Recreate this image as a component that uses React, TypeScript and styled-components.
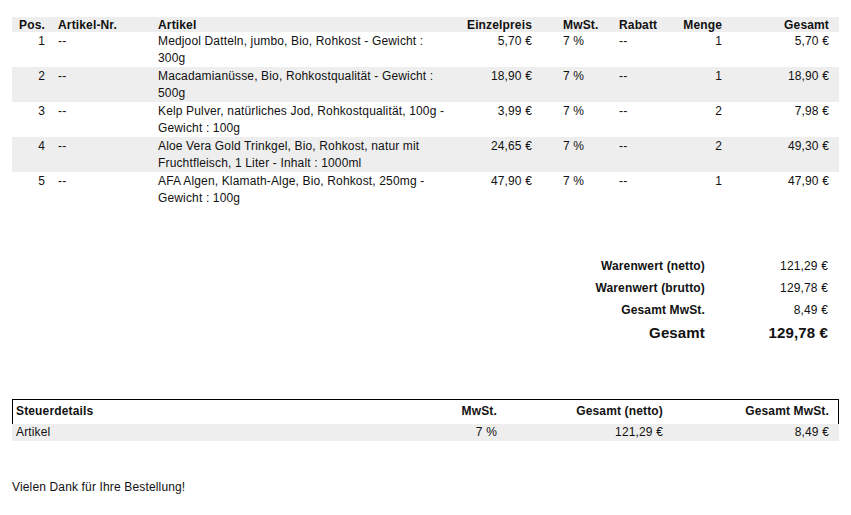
import styled, { createGlobalStyle } from 'styled-components';

const GlobalStyle = createGlobalStyle`
  html, body {
    margin: 0;
    padding: 0;
    background: #fff;
  }
  body {
    font-family: 'Liberation Sans', Arial, sans-serif;
    font-size: 12px;
    letter-spacing: 0.15px;
    color: #111;
  }
`;

const Page = styled.div`
  width: 851px;
  padding: 17px 12px 0;
  box-sizing: border-box;
`;

const ItemTable = styled.div`
  display: flex;
  flex-direction: column;
`;

const Row = styled.div<{ $head?: boolean; $shaded?: boolean }>`
  display: grid;
  grid-template-columns: 38px 103px 302px 82px 77px 46px 67px 112px;
  background: ${({ $shaded }) => ($shaded ? '#eeeeee' : 'transparent')};
  font-weight: ${({ $head }) => ($head ? 700 : 400)};
  line-height: ${({ $head }) => ($head ? '14px' : '17px')};
  padding-top: 1px;
  min-height: ${({ $head }) => ($head ? '15px' : '35px')};
  box-sizing: border-box;

  & > :nth-child(1) { text-align: right; padding-right: 5px; }
  & > :nth-child(2) { padding-left: 8px; }
  & > :nth-child(3) { padding-left: 5px; padding-right: 7px; }
  & > :nth-child(4) { text-align: right; padding-right: 5px; }
  & > :nth-child(5) { padding-left: 26px; }
  & > :nth-child(6) { padding-left: 5px; }
  & > :nth-child(7) { text-align: right; padding-right: 5px; }
  & > :nth-child(8) { text-align: right; padding-right: 10px; }
`;

const Cell = styled.div`
  white-space: normal;
`;

const Totals = styled.div`
  align-self: flex-end;
  display: grid;
  grid-template-columns: auto 123px;
  justify-content: end;
  margin: 48px 11px 0 0;
`;

const TotalLabel = styled.div<{ $big?: boolean }>`
  text-align: right;
  font-weight: 700;
  font-size: ${({ $big }) => ($big ? '15px' : '12px')};
  line-height: ${({ $big }) => ($big ? '23px' : '22px')};
`;

const TotalValue = styled(TotalLabel)`
  font-weight: ${({ $big }) => ($big ? 700 : 400)};
`;

const TaxBox = styled.div`
  margin-top: 55px;
  display: flex;
  flex-direction: column;
`;

const TaxRow = styled.div<{ $head?: boolean }>`
  display: grid;
  grid-template-columns: 1fr 100px 166px 165px;
  border-style: solid;
  border-color: ${({ $head }) => ($head ? '#000' : 'transparent')};
  border-width: ${({ $head }) => ($head ? '1px 1px 0 1px' : '0 1px')};
  background: ${({ $head }) => ($head ? '#fff' : '#eeeeee')};
  font-weight: ${({ $head }) => ($head ? 700 : 400)};
  line-height: ${({ $head }) => ($head ? '15px' : '17px')};
  padding: ${({ $head }) => ($head ? '4px 0 5px' : '0')};

  & > :nth-child(1) { padding-left: 3px; }
  & > :nth-child(n + 2) { text-align: right; padding-right: 10px; }
  & > :last-child { padding-right: 9px; }
`;

const Thanks = styled.p`
  margin: 38px 0 0;
  line-height: 17px;
`;

type Item = {
  pos: number;
  name: string;
  price: string;
  qty: number;
  total: string;
};

const items: Item[] = [
  { pos: 1, name: 'Medjool Datteln, jumbo, Bio, Rohkost - Gewicht : 300g', price: '5,70 €', qty: 1, total: '5,70 €' },
  { pos: 2, name: 'Macadamianüsse, Bio, Rohkostqualität - Gewicht : 500g', price: '18,90 €', qty: 1, total: '18,90 €' },
  { pos: 3, name: 'Kelp Pulver, natürliches Jod, Rohkostqualität, 100g - Gewicht : 100g', price: '3,99 €', qty: 2, total: '7,98 €' },
  { pos: 4, name: 'Aloe Vera Gold Trinkgel, Bio, Rohkost, natur mit Fruchtfleisch, 1 Liter - Inhalt : 1000ml', price: '24,65 €', qty: 2, total: '49,30 €' },
  { pos: 5, name: 'AFA Algen, Klamath-Alge, Bio, Rohkost, 250mg - Gewicht : 100g', price: '47,90 €', qty: 1, total: '47,90 €' },
];

const totals = [
  { label: 'Warenwert (netto)', value: '121,29 €' },
  { label: 'Warenwert (brutto)', value: '129,78 €' },
  { label: 'Gesamt MwSt.', value: '8,49 €' },
];

export default function App() {
  return (
    <>
      <GlobalStyle />
      <Page>
        <ItemTable>
          <Row $head $shaded>
            <Cell>Pos.</Cell>
            <Cell>Artikel-Nr.</Cell>
            <Cell>Artikel</Cell>
            <Cell>Einzelpreis</Cell>
            <Cell>MwSt.</Cell>
            <Cell>Rabatt</Cell>
            <Cell>Menge</Cell>
            <Cell>Gesamt</Cell>
          </Row>
          {items.map((it) => (
            <Row key={it.pos} $shaded={it.pos % 2 === 0}>
              <Cell>{it.pos}</Cell>
              <Cell>--</Cell>
              <Cell>{it.name}</Cell>
              <Cell>{it.price}</Cell>
              <Cell>7 %</Cell>
              <Cell>--</Cell>
              <Cell>{it.qty}</Cell>
              <Cell>{it.total}</Cell>
            </Row>
          ))}

          <Totals>
            {totals.map((t) => [
              <TotalLabel key={t.label + '-l'}>{t.label}</TotalLabel>,
              <TotalValue key={t.label + '-v'}>{t.value}</TotalValue>,
            ])}
            <TotalLabel $big>Gesamt</TotalLabel>
            <TotalValue $big>129,78 €</TotalValue>
          </Totals>
        </ItemTable>

        <TaxBox>
          <TaxRow $head>
            <Cell>Steuerdetails</Cell>
            <Cell>MwSt.</Cell>
            <Cell>Gesamt (netto)</Cell>
            <Cell>Gesamt MwSt.</Cell>
          </TaxRow>
          <TaxRow>
            <Cell>Artikel</Cell>
            <Cell>7 %</Cell>
            <Cell>121,29 €</Cell>
            <Cell>8,49 €</Cell>
          </TaxRow>
        </TaxBox>

        <Thanks>Vielen Dank für Ihre Bestellung!</Thanks>
      </Page>
    </>
  );
}
